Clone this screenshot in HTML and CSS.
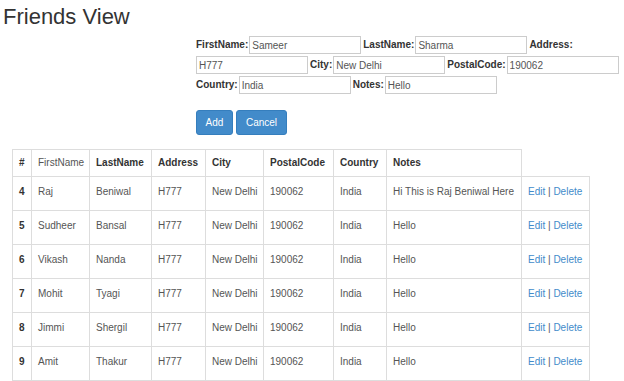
FILE: index.html
```html
<!DOCTYPE html>
<html lang="en">
	<head>
		<meta charset="UTF-8" />
		<meta name="viewport" content="width=device-width, initial-scale=1.0" />
		<title>Friends View</title>
		<link rel="stylesheet" href="styles.css">
	</head>
	<body>
		<h2 class="title">Friends View</h2>
		<form class="friend-form">
			<div class="fields">
				<label>FirstName:</label><input type="text" value="Sameer" />
				<label>LastName:</label><input type="text" value="Sharma" />
				<label>Address:</label><input type="text" value="H777" />
				<label>City:</label><input type="text" value="New Delhi" />
				<label>PostalCode:</label><input type="text" value="190062" />
				<label>Country:</label><input type="text" value="India" />
				<label>Notes:</label><input type="text" value="Hello" />
			</div>
			<div class="buttons">
				<button type="button" class="btn btn-add">Add</button>
				<button type="button" class="btn btn-cancel">Cancel</button>
			</div>
		</form>
		<table class="friends">
			<colgroup>
				<col class="c-id" />
				<col class="c-first" />
				<col class="c-last" />
				<col class="c-addr" />
				<col class="c-city" />
				<col class="c-postal" />
				<col class="c-country" />
				<col class="c-notes" />
				<col class="c-actions" />
			</colgroup>
			<thead>
				<tr>
					<th>#</th>
					<th class="plain">FirstName</th>
					<th>LastName</th>
					<th>Address</th>
					<th>City</th>
					<th>PostalCode</th>
					<th>Country</th>
					<th>Notes</th>
				</tr>
			</thead>
			<tbody>
				<tr>
					<td class="id">4</td><td>Raj</td><td>Beniwal</td><td>H777</td><td>New Delhi</td><td>190062</td><td>India</td><td>Hi This is Raj Beniwal Here</td>
					<td><a href="#">Edit</a> | <a href="#">Delete</a></td>
				</tr>
				<tr>
					<td class="id">5</td><td>Sudheer</td><td>Bansal</td><td>H777</td><td>New Delhi</td><td>190062</td><td>India</td><td>Hello</td>
					<td><a href="#">Edit</a> | <a href="#">Delete</a></td>
				</tr>
				<tr>
					<td class="id">6</td><td>Vikash</td><td>Nanda</td><td>H777</td><td>New Delhi</td><td>190062</td><td>India</td><td>Hello</td>
					<td><a href="#">Edit</a> | <a href="#">Delete</a></td>
				</tr>
				<tr>
					<td class="id">7</td><td>Mohit</td><td>Tyagi</td><td>H777</td><td>New Delhi</td><td>190062</td><td>India</td><td>Hello</td>
					<td><a href="#">Edit</a> | <a href="#">Delete</a></td>
				</tr>
				<tr>
					<td class="id">8</td><td>Jimmi</td><td>Shergil</td><td>H777</td><td>New Delhi</td><td>190062</td><td>India</td><td>Hello</td>
					<td><a href="#">Edit</a> | <a href="#">Delete</a></td>
				</tr>
				<tr>
					<td class="id">9</td><td>Amit</td><td>Thakur</td><td>H777</td><td>New Delhi</td><td>190062</td><td>India</td><td>Hello</td>
					<td><a href="#">Edit</a> | <a href="#">Delete</a></td>
				</tr>
			</tbody>
		</table>
	</body>
</html>
```

FILE: styles.css
```css
* {
	margin: 0;
	padding: 0;
	box-sizing: border-box;
}
body {
	font-family: "Liberation Sans", Arial, sans-serif;
	font-size: 10px;
	color: #333;
	background: #fff;
}
.title {
	font-size: 22px;
	font-weight: normal;
	line-height: 26px;
	margin: 4px 0 0 3px;
	color: #333;
}
.friend-form {
	margin: 6px 0 0 196px;
}
.fields {
	width: 428px;
	display: flex;
	flex-wrap: wrap;
	align-items: center;
	row-gap: 2px;
}
.fields label {
	font-weight: bold;
	line-height: 18px;
	margin-right: 1px;
	color: #333;
}
.fields input {
	width: 112px;
	height: 18px;
	border: 1px solid #ccc;
	padding: 0 2px;
	margin-right: 2px;
	font-family: "Liberation Sans", Arial, sans-serif;
	font-size: 10px;
	color: #555;
}
.buttons {
	display: flex;
	gap: 3px;
	margin-top: 16px;
}
.btn {
	height: 25px;
	border: 1px solid #357ebd;
	border-radius: 3px;
	background: #428bca;
	color: #fff;
	font-family: "Liberation Sans", Arial, sans-serif;
	font-size: 10px;
}
.btn-add {
	width: 37px;
}
.btn-cancel {
	width: 51px;
}
.friends {
	margin: 14px 0 0 12px;
	width: 577px;
	table-layout: fixed;
	border-collapse: collapse;
}
.c-id { width: 19px; }
.c-first { width: 58px; }
.c-last { width: 62px; }
.c-addr { width: 54px; }
.c-city { width: 58px; }
.c-postal { width: 70px; }
.c-country { width: 53px; }
.c-notes { width: 135px; }
.c-actions { width: 68px; }
.friends th,
.friends td {
	border: 1px solid #ddd;
	text-align: left;
	white-space: nowrap;
	line-height: 14px;
	vertical-align: top;
}
.friends th {
	padding: 6px 6px 6px;
	font-weight: bold;
	color: #333;
}
.friends th.plain {
	font-weight: normal;
	color: #555;
}
.friends td {
	padding: 8px 6px 11px;
	color: #555;
}
.friends td.id {
	font-weight: bold;
	color: #333;
}
.friends a {
	color: #428bca;
	text-decoration: none;
}
```
